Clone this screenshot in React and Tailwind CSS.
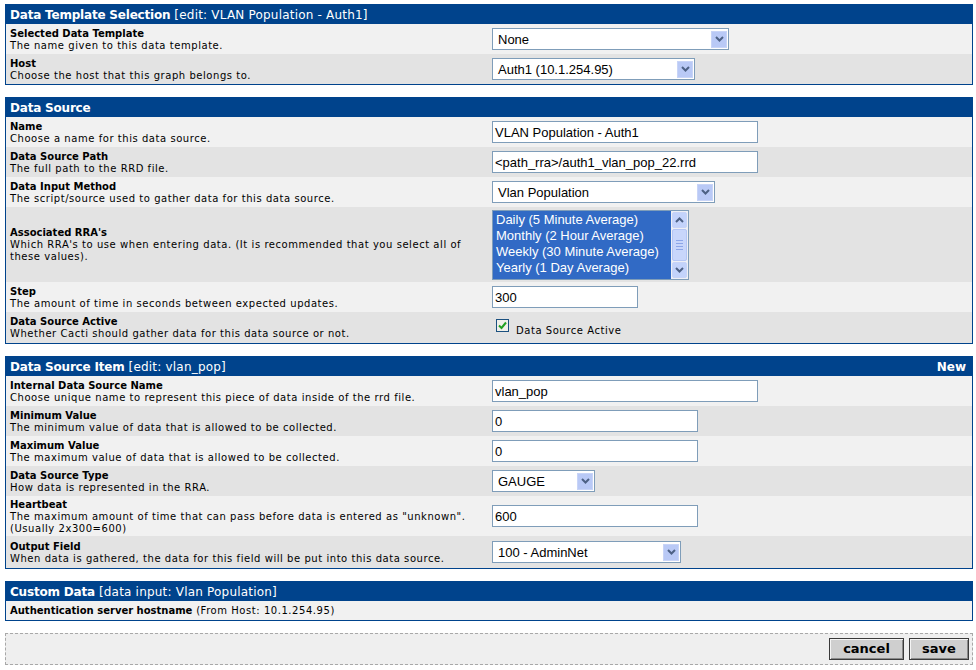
import React from "react";

const label = "font-['DejaVu_Sans',sans-serif]";
const ctrl = "font-['Liberation_Sans',Arial,sans-serif]";

const ArrowBtn = () => (
  <div className="mr-[1px] flex h-[17px] w-[16px] items-center justify-center border border-[#c8d4f7] bg-[#b9c9f6]">
    <svg width="9" height="6" viewBox="0 0 9 6">
      <path d="M1 1 L4.5 4.5 L8 1" stroke="#4d6185" strokeWidth="2" fill="none" />
    </svg>
  </div>
);

const Select = ({ value, w }) => (
  <div className={`flex h-[22px] items-center justify-between border border-[#7f9db9] bg-white ${w}`}>
    <span className={`pl-[5px] pt-[1px] text-[13px] text-black ${ctrl}`}>{value}</span>
    <ArrowBtn />
  </div>
);

const TextInput = ({ value, w }) => (
  <div className={`flex h-[22px] items-center border border-[#7f9db9] bg-white ${w}`}>
    <span className={`pl-[2px] pt-[1px] text-[13px] text-black ${ctrl}`}>{value}</span>
  </div>
);

const Row = ({ title, desc, children, dark, h }) => (
  <div className={`flex items-center ${dark ? "bg-[#e3e3e3]" : "bg-[#f1f1f1]"} ${h}`}>
    <div className={`w-1/2 pl-[4px] pr-2 pt-[1px] text-[10px] leading-[12px] text-black ${label}`}>
      <div className="font-bold">{title}</div>
      <div className="tracking-[0.55px]">{desc}</div>
    </div>
    <div className="w-1/2 pl-[3px]">{children}</div>
  </div>
);

const Box = ({ title, sub, right, children }) => (
  <div className="mb-[12px] border border-[#00438c]">
    <div className={`flex h-[19px] items-center justify-between bg-[#00438c] pl-[4px] pr-[6px] pt-[1px] text-[12px] text-white ${label}`}>
      <div>
        <span className="font-bold tracking-[-0.2px]">{title}</span>
        {sub && <span className="tracking-[0.2px]"> {sub}</span>}
      </div>
      {right && <span className="font-bold">{right}</span>}
    </div>
    {children}
  </div>
);

const rras = [
  "Daily (5 Minute Average)",
  "Monthly (2 Hour Average)",
  "Weekly (30 Minute Average)",
  "Yearly (1 Day Average)",
];

const MultiSelect = () => (
  <div className="flex h-[70px] w-[197px] border border-[#7f9db9] bg-white">
    <div className="flex-1 overflow-hidden bg-[#316ac5] pt-[1px]">
      {rras.map((r) => (
        <div key={r} className={`h-[16px] pl-[3px] text-[13px] leading-[16px] whitespace-nowrap text-white ${ctrl}`}>
          {r}
        </div>
      ))}
    </div>
    <div className="flex w-[17px] flex-col bg-[#eef0f6] p-[1px]">
      <div className="flex h-[16px] items-center justify-center rounded-[2px] border border-[#c8d4f7] bg-[#c3d3fb]">
        <svg width="9" height="6" viewBox="0 0 9 6">
          <path d="M1 5 L4.5 1.5 L8 5" stroke="#4d6185" strokeWidth="2" fill="none" />
        </svg>
      </div>
      <div className="my-[1px] flex flex-1 flex-col items-center justify-center gap-[2px] rounded-[2px] border border-[#b5c6f5] bg-[#c8d6fb]">
        <div className="h-[1px] w-[7px] bg-[#8ca6e8]" />
        <div className="h-[1px] w-[7px] bg-[#8ca6e8]" />
        <div className="h-[1px] w-[7px] bg-[#8ca6e8]" />
        <div className="h-[1px] w-[7px] bg-[#8ca6e8]" />
      </div>
      <div className="flex h-[16px] items-center justify-center rounded-[2px] border border-[#c8d4f7] bg-[#c3d3fb]">
        <svg width="9" height="6" viewBox="0 0 9 6">
          <path d="M1 1 L4.5 4.5 L8 1" stroke="#4d6185" strokeWidth="2" fill="none" />
        </svg>
      </div>
    </div>
  </div>
);

const Checkbox = () => (
  <div className="flex items-start pl-[4px]">
    <div className="flex h-[13px] w-[13px] items-center justify-center border border-[#1c5180] bg-[#f0f0ea]">
      <svg width="9" height="9" viewBox="0 0 9 9">
        <path d="M1 4.5 L3.5 7 L8 1.5" stroke="#21a121" strokeWidth="2" fill="none" />
      </svg>
    </div>
    <span className={`ml-[7px] mt-[7px] text-[10px] leading-[10px] tracking-[0.55px] text-black ${label}`}>Data Source Active</span>
  </div>
);

export default function App() {
  return (
    <div className="min-h-[670px] bg-white pt-[4px] pl-[5px] pr-[3px]">
      <Box title="Data Template Selection" sub="[edit: VLAN Population - Auth1]">
        <Row h="h-[30px]" title="Selected Data Template" desc="The name given to this data template.">
          <Select value="None" w="w-[237px]" />
        </Row>
        <Row h="h-[30px]" dark title="Host" desc="Choose the host that this graph belongs to.">
          <Select value="Auth1 (10.1.254.95)" w="w-[203px]" />
        </Row>
      </Box>

      <Box title="Data Source">
        <Row h="h-[30px]" title="Name" desc="Choose a name for this data source.">
          <TextInput value="VLAN Population - Auth1" w="w-[266px]" />
        </Row>
        <Row h="h-[30px]" dark title="Data Source Path" desc="The full path to the RRD file.">
          <TextInput value="<path_rra>/auth1_vlan_pop_22.rrd" w="w-[266px]" />
        </Row>
        <Row h="h-[30px]" title="Data Input Method" desc="The script/source used to gather data for this data source.">
          <Select value="Vlan Population" w="w-[223px]" />
        </Row>
        <Row
          h="h-[75px]"
          dark
          title="Associated RRA's"
          desc="Which RRA's to use when entering data. (It is recommended that you select all of these values)."
        >
          <MultiSelect />
        </Row>
        <Row h="h-[30px]" title="Step" desc="The amount of time in seconds between expected updates.">
          <TextInput value="300" w="w-[146px]" />
        </Row>
        <Row h="h-[31px]" dark title="Data Source Active" desc="Whether Cacti should gather data for this data source or not.">
          <Checkbox />
        </Row>
      </Box>

      <Box title="Data Source Item" sub="[edit: vlan_pop]" right="New">
        <Row
          h="h-[30px]"
          title="Internal Data Source Name"
          desc="Choose unique name to represent this piece of data inside of the rrd file."
        >
          <TextInput value="vlan_pop" w="w-[266px]" />
        </Row>
        <Row h="h-[30px]" dark title="Minimum Value" desc="The minimum value of data that is allowed to be collected.">
          <TextInput value="0" w="w-[206px]" />
        </Row>
        <Row h="h-[30px]" title="Maximum Value" desc="The maximum value of data that is allowed to be collected.">
          <TextInput value="0" w="w-[206px]" />
        </Row>
        <Row h="h-[30px]" dark title="Data Source Type" desc="How data is represented in the RRA.">
          <Select value="GAUGE" w="w-[103px]" />
        </Row>
        <Row
          h="h-[40px]"
          title="Heartbeat"
          desc={'The maximum amount of time that can pass before data is entered as "unknown". (Usually 2x300=600)'}
        >
          <TextInput value="600" w="w-[206px]" />
        </Row>
        <Row
          h="h-[32px]"
          dark
          title="Output Field"
          desc="When data is gathered, the data for this field will be put into this data source."
        >
          <Select value="100 - AdminNet" w="w-[189px]" />
        </Row>
      </Box>

      <Box title="Custom Data" sub="[data input: Vlan Population]">
        <div className={`flex h-[19px] items-center bg-[#f1f1f1] pl-[4px] text-[10px] text-black ${label}`}>
          <span className="font-bold">Authentication server hostname</span>
          <span className="tracking-[0.55px]">&nbsp;(From Host: 10.1.254.95)</span>
        </div>
      </Box>

      <div className="flex h-[32px] items-center justify-end gap-[5px] border border-dashed border-[#a8a8a8] bg-[#efefef] pr-[3px]">
        <button className={`h-[22px] w-[75px] border border-[#3a3a3a] bg-[#cfcfcf] text-[13px] font-bold text-black shadow-[inset_1px_1px_0_#f4f4f4,inset_-1px_-1px_0_#8a8a8a] ${label}`}>
          cancel
        </button>
        <button className={`h-[22px] w-[60px] border border-[#3a3a3a] bg-[#cfcfcf] text-[13px] font-bold text-black shadow-[inset_1px_1px_0_#f4f4f4,inset_-1px_-1px_0_#8a8a8a] ${label}`}>
          save
        </button>
      </div>
    </div>
  );
}
